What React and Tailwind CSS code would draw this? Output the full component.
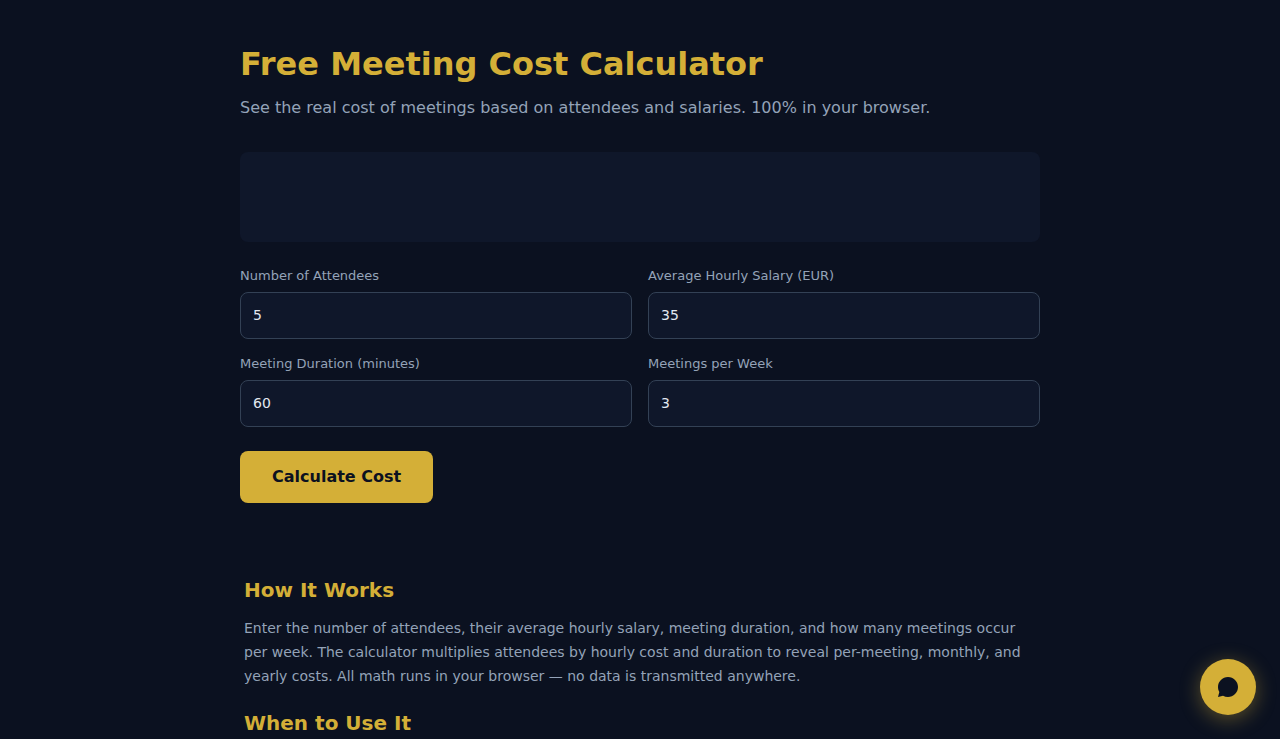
const fields = [
  { id: "attendees", label: "Number of Attendees", value: 5 },
  { id: "salary", label: "Average Hourly Salary (EUR)", value: 35 },
  { id: "duration", label: "Meeting Duration (minutes)", value: 60 },
  { id: "frequency", label: "Meetings per Week", value: 3 },
];

function Field({ id, label, value }) {
  return (
    <div>
      <label htmlFor={id} className="mb-1.5 block text-[13px] leading-5 text-[#94a3b8]">
        {label}
      </label>
      <input
        id={id}
        type="number"
        defaultValue={value}
        className="block h-[47px] w-full rounded-lg border border-[#334155] bg-[#0f172a] px-3 pb-0.5 text-sm text-[#e2e8f0] outline-none focus:border-[#d4af37]"
      />
    </div>
  );
}

export default function App() {
  return (
    <div className="min-h-screen bg-[#0b1120] font-['DejaVu_Sans',sans-serif] text-[#94a3b8]">
      <main className="mx-auto max-w-[832px] px-4 pt-10">
        <h1 className="text-[32px] leading-12 font-bold text-[#d4af37]">Free Meeting Cost Calculator</h1>
        <p className="mt-2 text-base leading-6">
          See the real cost of meetings based on attendees and salaries. 100% in your browser.
        </p>

        <div className="mt-8 h-[90px] rounded-lg bg-[#0f172a]" />

        <form onSubmit={(e) => e.preventDefault()}>
          <div className="mt-6 grid grid-cols-2 gap-x-4 gap-y-[15px]">
            {fields.map((f) => (
              <Field key={f.id} {...f} />
            ))}
          </div>
          <button
            type="submit"
            className="mt-6 h-[52px] rounded-lg bg-[#d4af37] px-8 text-base font-bold text-[#0b1120]"
          >
            Calculate Cost
          </button>
        </form>

        <section className="mt-[73px] px-1">
          <h2 className="text-xl leading-7 font-bold text-[#d4af37]">How It Works</h2>
          <p className="mt-3 text-sm leading-6">
            Enter the number of attendees, their average hourly salary, meeting duration, and how many meetings occur
            per week. The calculator multiplies attendees by hourly cost and duration to reveal per-meeting, monthly,
            and yearly costs. All math runs in your browser — no data is transmitted anywhere.
          </p>
          <h2 className="mt-[21px] text-xl leading-7 font-bold text-[#d4af37]">When to Use It</h2>
        </section>
      </main>

      <button
        type="button"
        aria-label="Open chat"
        className="fixed right-6 bottom-6 flex size-14 items-center justify-center rounded-full bg-[#d4af37] shadow-[0_4px_20px_rgba(212,175,55,0.4)]"
      >
        <svg viewBox="0 0 24 24" className="size-6 fill-[#0b1120]" aria-hidden="true">
          <path d="M12 2C6.48 2 2 6.48 2 12c0 1.82.49 3.53 1.34 5L2 22l5-1.34A9.96 9.96 0 0 0 12 22c5.52 0 10-4.48 10-10S17.52 2 12 2z" />
        </svg>
      </button>
    </div>
  );
}
